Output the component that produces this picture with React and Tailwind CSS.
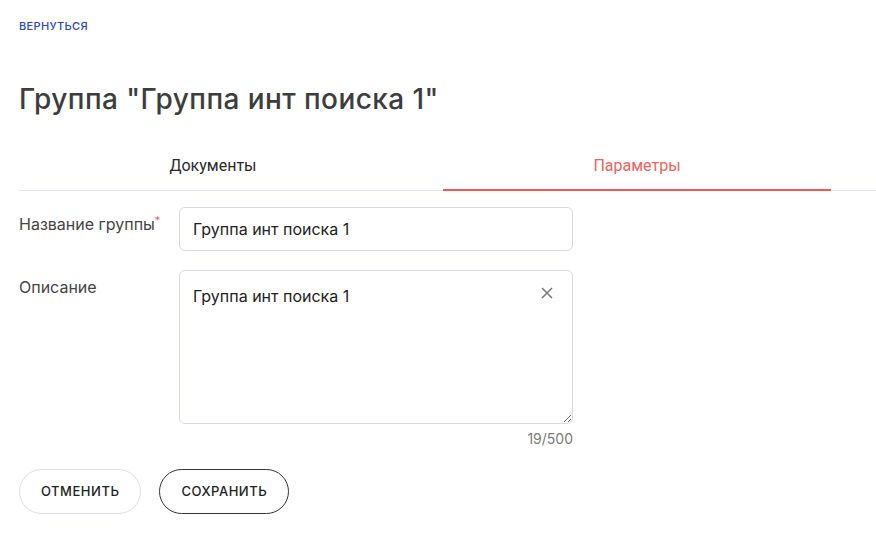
import React, { useState } from 'react'

const TABS = ['Документы', 'Параметры']

export default function App() {
  const [tab, setTab] = useState(1)
  const [name, setName] = useState('Группа инт поиска 1')
  const [desc, setDesc] = useState('Группа инт поиска 1')

  return (
    <div className="min-h-screen bg-white px-[19px] text-[#3b3b3b]" style={{ fontFamily: 'Inter, "Noto Sans", sans-serif' }}>
      <div className="pt-[12px]">
        <a href="#" className="text-[11px] font-medium uppercase tracking-[0.03em] text-[#2946c7]">Вернуться</a>
      </div>

      <h1 className="mt-[46px] text-[28px] font-medium leading-[34px] tracking-[0.015em] text-[#3d3d3d]">
        Группа "Группа инт поиска 1"
      </h1>

      {/* Tabs */}
      <div className="mt-[33px] -mr-[19px] flex gap-[36px] border-b border-[#e2e6ee]">
        {TABS.map((t, i) => (
          <button
            key={t}
            onClick={() => setTab(i)}
            className={`-mb-px w-[388px] pb-[11px] pt-[5px] text-[16px] ${
              tab === i ? 'border-b-2 border-[#f05a52] text-[#f0625a]' : 'border-b-2 border-transparent text-[#2a2a2a]'
            }`}
            style={{ fontFamily: 'Roboto, sans-serif' }}
          >
            {t}
          </button>
        ))}
      </div>

      {/* Form */}
      <div className="mt-[16px] flex flex-col gap-[19px]">
        <div className="flex">
          <label className="w-[160px] pt-[5px] text-[16px] text-[#444]">
            Название группы<span className="align-top text-[11px] text-[#f0625a]">*</span>
          </label>
          <input
            value={name}
            onChange={e => setName(e.target.value)}
            className="h-[44px] w-[394px] rounded-[6px] border border-[#d6dae2] px-[13px] text-[16px] text-[#222] outline-none"
          />
        </div>
        <div className="flex">
          <label className="w-[160px] pt-[5px] text-[16px] text-[#444]">Описание</label>
          <div className="flex flex-col items-end">
            <div className="relative">
              <textarea
                value={desc}
                onChange={e => setDesc(e.target.value)}
                className="block h-[154px] w-[394px] resize-y rounded-[6px] border border-[#d6dae2] px-[13px] py-[14px] text-[16px] leading-[22px] text-[#222] outline-none"
              />
              <button
                onClick={() => setDesc('')}
                className="absolute right-[19px] top-[16px] text-[#777]"
              >
                <svg width="14" height="14" viewBox="0 0 14 14" fill="none" stroke="currentColor" strokeWidth="1.5">
                  <path d="M2 2l10 10M12 2L2 12" />
                </svg>
              </button>
            </div>
            <span className="mt-[4px] text-[14px] text-[#7a7a7a]">{desc.length}/500</span>
          </div>
        </div>
      </div>

      <div className="mt-[20px] flex gap-[18px]">
        <button className="h-[45px] rounded-full border border-[#dde2ea] px-[21px] text-[13px] font-medium uppercase tracking-[0.04em] text-[#222]">
          Отменить
        </button>
        <button className="h-[45px] rounded-full border border-[#333] px-[21px] text-[13px] font-medium uppercase tracking-[0.04em] text-[#222]">
          Сохранить
        </button>
      </div>
    </div>
  )
}
